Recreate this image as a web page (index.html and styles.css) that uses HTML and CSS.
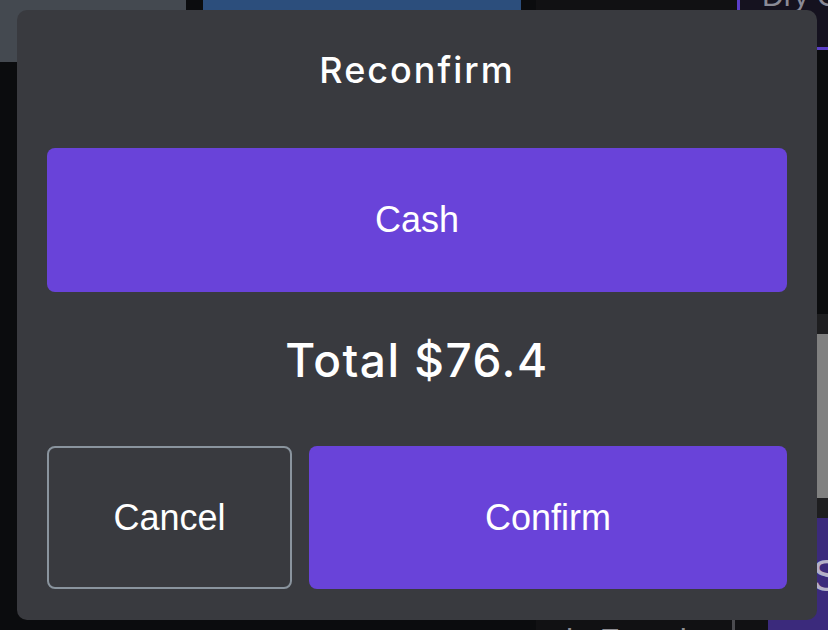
FILE: index.html
```html
<!DOCTYPE html>
<html lang="en">
<head>
<meta charset="utf-8">
<title>Reconfirm</title>
<link rel="stylesheet" href="styles.css">
</head>
<body>
<div class="app">
  <div class="bg-gray"></div>
  <div class="bg-blue"></div>
  <div class="bg-panel">
    <div class="panel-foot"><span class="foot-text">le Functions</span></div>
  </div>
  <div class="bg-tab"><span class="tab-text">Dry Cleaning</span></div>
  <div class="bg-side-a"></div>
  <div class="bg-side-b"></div>
  <div class="bg-side-c"></div>
  <div class="bg-side-d"><span class="side-text">ST</span></div>
</div>

<div class="dialog">
  <h2 class="dialog-title">Reconfirm</h2>
  <button class="method">Cash</button>
  <div class="total">Total $76.4</div>
  <div class="actions">
    <button class="btn btn-cancel">Cancel</button>
    <button class="btn btn-confirm">Confirm</button>
  </div>
</div>
</body>
</html>
```
FILE: styles.css
```css
html, body {
  margin: 0;
  padding: 0;
}
body {
  width: 828px;
  height: 630px;
  overflow: hidden;
  background: #0b0c0e;
  font-family: "Liberation Sans", Arial, sans-serif;
  position: relative;
}

.app {
  display: grid;
  grid-template-columns: 186px 17px 318px 15px 201px 31px 60px;
  grid-template-rows: 50px 12px 252px 20px 164px 20px 112px;
  width: 828px;
  height: 630px;
}
.bg-gray {
  grid-column: 1;
  grid-row: 1 / 3;
  background: #444950;
}
.bg-blue {
  grid-column: 3;
  grid-row: 1 / 3;
  background: #2c4e7c;
}
.bg-panel {
  grid-column: 5 / 7;
  grid-row: 1 / 8;
  background: #111113;
  display: flex;
  flex-direction: column;
  justify-content: flex-end;
}
.panel-foot {
  height: 10px;
  width: 196px;
  border-right: 3px solid #4b4b4f;
  overflow: hidden;
}
.foot-text {
  display: block;
  margin-left: 30px;
  margin-top: 4px;
  font-size: 32px;
  line-height: 32px;
  color: #8e8e93;
  white-space: nowrap;
}
.bg-tab {
  grid-column: 6 / 8;
  grid-row: 1;
  background: #15121f;
  border-left: 3px solid #5a3ec8;
  border-bottom: 3px solid #5a3ec8;
  overflow: hidden;
}
.tab-text {
  display: block;
  margin-top: -20px;
  margin-left: 22px;
  font-size: 30px;
  line-height: 32px;
  color: #8a8a96;
  white-space: nowrap;
}
.bg-side-a {
  grid-column: 7;
  grid-row: 4;
  background: #1e1e20;
}
.bg-side-b {
  grid-column: 7;
  grid-row: 5;
  background: #808080;
}
.bg-side-c {
  grid-column: 7;
  grid-row: 6;
  background: #1e1e20;
}
.bg-side-d {
  grid-column: 7;
  grid-row: 7;
  background: #3b2a7c;
  overflow: hidden;
}
.side-text {
  display: block;
  margin-top: 34px;
  margin-left: 44px;
  font-size: 44px;
  line-height: 48px;
  color: #b4b0c8;
  white-space: nowrap;
}

/* Modal dialog overlays the page */
.dialog {
  position: absolute;
  z-index: 10;
  left: 17px;
  top: 10px;
  width: 800px;
  height: 610px;
  box-sizing: border-box;
  padding: 0 30px 31px;
  background: #393a3f;
  border-radius: 10px;
  display: flex;
  flex-direction: column;
  color: #fff;
}
.dialog-title {
  margin: 0 0 18px;
  height: 120px;
  line-height: 120px;
  text-align: center;
  font-family: Inter, "Liberation Sans", sans-serif;
  font-weight: 500;
  font-size: 36px;
  letter-spacing: 2px;
}
.method {
  height: 144px;
  border: none;
  border-radius: 8px;
  background: #6943d9;
  color: #fff;
  font-family: "Liberation Sans", Arial, sans-serif;
  font-size: 36px;
  padding: 0;
}
.total {
  height: 154px;
  box-sizing: border-box;
  padding-bottom: 18px;
  display: flex;
  align-items: center;
  justify-content: center;
  font-family: Inter, "Liberation Sans", sans-serif;
  font-weight: 500;
  font-size: 46px;
  letter-spacing: 1.5px;
}
.actions {
  display: grid;
  grid-template-columns: 245fr 478fr;
  gap: 17px;
  height: 143px;
}
.btn {
  border-radius: 8px;
  font-family: "Liberation Sans", Arial, sans-serif;
  font-size: 36px;
  color: #fff;
  padding: 0;
}
.btn-cancel {
  background: transparent;
  border: 2px solid #8a949e;
}
.btn-confirm {
  background: #6943d9;
  border: none;
}
```
